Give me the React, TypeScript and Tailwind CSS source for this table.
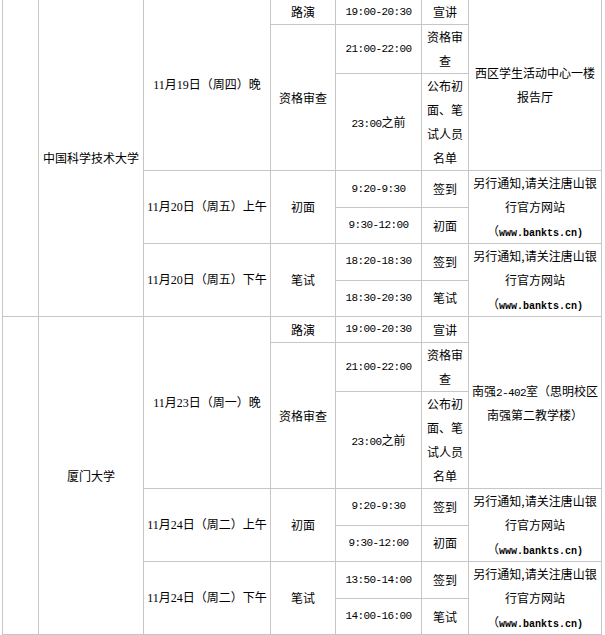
import React from "react";

const M = ({ children, bold }: { children: React.ReactNode; bold?: boolean }) => (
  <span
    className={
      bold
        ? "font-['Liberation_Mono',monospace] text-[10px] font-bold leading-none"
        : "font-['Liberation_Mono',monospace] text-[11px] tracking-[-0.6px] leading-none"
    }
  >
    {children}
  </span>
);

const td = "border border-[#c6c6c6] p-0 px-[3px] text-center align-middle leading-[24px]";
const dateTd =
  td + " font-['Liberation_Serif','Noto_Sans_CJK_SC',serif]";

function Lines({ lines }: { lines: React.ReactNode[] }) {
  return (
    <>
      {lines.map((l, i) => (
        <div key={i} className="whitespace-nowrap h-[24px] leading-[24px]">
          {l}
        </div>
      ))}
    </>
  );
}

function TimeCell({ h, children }: { h: number; children: React.ReactNode }) {
  const cls =
    h === 24
      ? "h-[24px]"
      : h === 25
      ? "h-[25px]"
      : h === 48
      ? "h-[48px]"
      : h === 96
      ? "h-[96px]"
      : h === 36
      ? "h-[36px]"
      : h === 34
      ? "h-[34px]"
      : "h-[35px]";
  return (
    <td className={td}>
      <div className={cls + " flex items-center justify-center whitespace-nowrap"}>{children}</div>
    </td>
  );
}

const Notice = () => (
  <Lines
    lines={[
      "另行通知,请关注唐山银",
      "行官方网站",
      <>
        （<M bold>www.bankts.cn)</M>
      </>,
    ]}
  />
);

type Section = {
  uni: string;
  d1: string;
  d2: string;
  d3: string;
  loc: React.ReactNode[];
  t3: [string, string];
  h: number[];
};

function SectionRows({ s }: { s: Section }) {
  return (
    <>
      <tr>
        <td className={td} rowSpan={7}></td>
        <td className={td} rowSpan={7}>
          {s.uni}
        </td>
        <td className={dateTd} rowSpan={3}>
          {s.d1}
        </td>
        <td className={td}>路演</td>
        <TimeCell h={s.h[0]}>
          <M>19:00-20:30</M>
        </TimeCell>
        <td className={td}>宣讲</td>
        <td className={td} rowSpan={3}>
          <Lines lines={s.loc} />
        </td>
      </tr>
      <tr>
        <td className={td} rowSpan={2}>
          资格审查
        </td>
        <TimeCell h={s.h[1]}>
          <M>21:00-22:00</M>
        </TimeCell>
        <td className={td}>
          <Lines lines={["资格审", "查"]} />
        </td>
      </tr>
      <tr>
        <TimeCell h={s.h[2]}>
          <span>
            <M>23:00</M>之前
          </span>
        </TimeCell>
        <td className={td}>
          <Lines lines={["公布初", "面、笔", "试人员", "名单"]} />
        </td>
      </tr>
      <tr>
        <td className={dateTd} rowSpan={2}>
          {s.d2}
        </td>
        <td className={td} rowSpan={2}>
          初面
        </td>
        <TimeCell h={s.h[3]}>
          <M>9:20-9:30</M>
        </TimeCell>
        <td className={td}>签到</td>
        <td className={td} rowSpan={2}>
          <Notice />
        </td>
      </tr>
      <tr>
        <TimeCell h={s.h[4]}>
          <M>9:30-12:00</M>
        </TimeCell>
        <td className={td}>初面</td>
      </tr>
      <tr>
        <td className={dateTd} rowSpan={2}>
          {s.d3}
        </td>
        <td className={td} rowSpan={2}>
          笔试
        </td>
        <TimeCell h={s.h[5]}>
          <M>{s.t3[0]}</M>
        </TimeCell>
        <td className={td}>签到</td>
        <td className={td} rowSpan={2}>
          <Notice />
        </td>
      </tr>
      <tr>
        <TimeCell h={s.h[6]}>
          <M>{s.t3[1]}</M>
        </TimeCell>
        <td className={td}>笔试</td>
      </tr>
    </>
  );
}

const sections: Section[] = [
  {
    uni: "中国科学技术大学",
    d1: "11月19日（周四）晚",
    d2: "11月20日（周五）上午",
    d3: "11月20日（周五）下午",
    loc: ["西区学生活动中心一楼", "报告厅"],
    t3: ["18:20-18:30", "18:30-20:30"],
    h: [24, 48, 96, 36, 35, 35, 35],
  },
  {
    uni: "厦门大学",
    d1: "11月23日（周一）晚",
    d2: "11月24日（周二）上午",
    d3: "11月24日（周二）下午",
    loc: [
      <>
        南强<M>2-402</M>室（思明校区
      </>,
      "南强第二教学楼）",
    ],
    t3: ["13:50-14:00", "14:00-16:00"],
    h: [25, 48, 96, 35, 35, 35, 34],
  },
];

export default function App() {
  return (
    <div className="w-[605px] h-[635px] overflow-hidden bg-white">
      <table className="ml-[2px] -mt-px w-[600px] table-fixed border-collapse text-[12px] text-black font-['Noto_Sans_CJK_SC',sans-serif]">
        <colgroup>
          <col className="w-[36px]" />
          <col className="w-[105px]" />
          <col className="w-[127px]" />
          <col className="w-[65px]" />
          <col className="w-[86px]" />
          <col className="w-[47px]" />
          <col className="w-[133px]" />
        </colgroup>
        <tbody>
          {sections.map((s, i) => (
            <SectionRows key={i} s={s} />
          ))}
        </tbody>
      </table>
    </div>
  );
}
